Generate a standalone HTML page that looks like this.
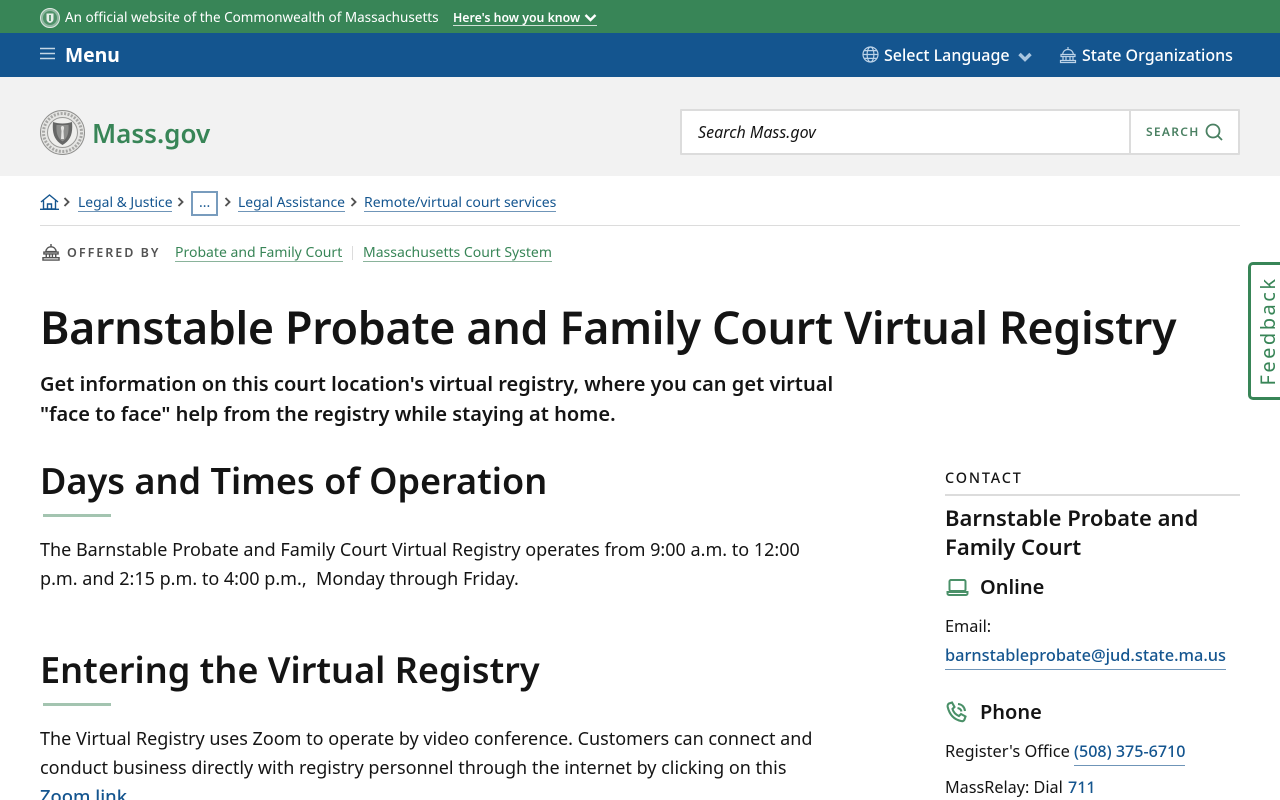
<!DOCTYPE html>
<html lang="en">
<head>
<meta charset="utf-8">
<title>Barnstable Probate and Family Court Virtual Registry | Mass.gov</title>
<style>
html,body{margin:0;padding:0;width:1280px;height:800px;overflow:hidden;background:#fff}
body{position:relative;font-family:"Noto Sans","Noto Sans CJK JP","Liberation Sans",sans-serif;color:#141414}
.t{position:absolute;white-space:nowrap;line-height:30px;height:30px}
.b{position:absolute}
a{color:inherit;text-decoration:none}
.u{position:absolute;height:1px}
svg{position:absolute;overflow:visible}
</style>
</head>
<body>
<div class="b" style="left:0;top:0;width:1280px;height:33px;background:#388557"></div>
<div class="b" style="left:0;top:33px;width:1280px;height:44px;background:#14558f"></div>
<div class="b" style="left:0;top:77px;width:1280px;height:99px;background:#f2f2f2"></div>

<svg style="left:40px;top:8px" width="20" height="20" viewBox="0 0 20 20"><circle cx="10" cy="10" r="9.500" fill="#8fb8a0" stroke="#dfe9e3"/><circle cx="10" cy="10" r="7" fill="#4f9069"/><path d="M6.500 5.500h7v5.500c0 2.200-1.700 3.500-3.500 4-1.800-.5-3.500-1.800-3.500-4z" fill="#e6efe9"/><path d="M10 7v6" stroke="#4f9069" stroke-width="1.800"/></svg>
<span class="t" style="left:65px;top:2px;font-size:13.500px;color:#fff">An official website of the Commonwealth of Massachusetts</span>
<span class="t" style="left:453px;top:3px;font-size:12.300px;font-weight:600;color:#fff">Here's how you know</span>
<svg style="left:584px;top:13px" width="13" height="10" viewBox="0 0 13 10"><path d="M1.500 2l5 5 5-5" fill="none" stroke="#fff" stroke-width="2.400"/></svg>
<div class="u" style="left:453px;top:25px;width:144px;height:1px;background:#cfe0d6"></div>

<svg style="left:40px;top:47px" width="15" height="14" viewBox="0 0 15 14"><path d="M0 1.500h15M0 6.500h15M0 11.500h15" stroke="#c5d7e6" stroke-width="1.400"/></svg>
<span class="t" style="left:65px;top:40px;font-size:19.300px;font-weight:700;color:#fff">Menu</span>

<svg style="left:862px;top:46px" width="17" height="17" viewBox="0 0 17 17" fill="none" stroke="#bcd3e8" stroke-width="1.200"><circle cx="8.500" cy="8.500" r="7.500"/><ellipse cx="8.500" cy="8.500" rx="3.400" ry="7.500"/><path d="M1 8.500h15M2 4.600h13M2 12.400h13"/></svg>
<span class="t" style="left:884px;top:40px;font-size:16px;font-weight:500;color:#fff">Select Language</span>
<svg style="left:1018px;top:52px" width="14" height="10" viewBox="0 0 14 10"><path d="M1.500 2L7 7.500 12.500 2" fill="none" stroke="#a9c6e0" stroke-width="3.400"/></svg>
<svg style="left:1059px;top:46px" width="18" height="18" viewBox="0 0 18 18" fill="none" stroke="#bcd3e8" stroke-width="1.200"><path d="M9 1v2M3.500 8.500C4 5.500 6 3.500 9 3.500s5 2 5.500 5zM2 8.500h14v2H2zM4 10.500v4M7 10.500v4M11 10.500v4M14 10.500v4M1.500 14.500h15v2h-15z"/></svg>
<span class="t" style="left:1082px;top:40px;font-size:16px;font-weight:500;color:#fff">State Organizations</span>

<svg style="left:40px;top:110px" width="45" height="45" viewBox="0 0 45 45"><circle cx="22.500" cy="22.500" r="22" fill="#e6e6e4" stroke="#8f8f8d"/><circle cx="22.500" cy="22.500" r="19" fill="none" stroke="#a7a7a5" stroke-width="3" stroke-dasharray="2 1.500"/><circle cx="22.500" cy="22.500" r="15" fill="#eeeeec" stroke="#9a9a98"/><path d="M13 12c6 2 13 2 19 0 1 11-1 18-9.500 23C14 30 12 23 13 12z" fill="#666766"/><path d="M16.500 15h12c.5 8-1 13-6 16.500C17.500 28 16 23 16.500 15z" fill="#8d8e8c"/><path d="M22.500 16c1.200 0 1.600 1 1.600 2l-.6 3 .5 8h-3l.5-8-.6-3c0-1 .4-2 1.600-2z" fill="#e4e4e2"/></svg>
<span class="t" style="left:92px;top:118px;font-size:26px;font-weight:600;color:#388557">Mass.gov</span>

<div class="b" style="left:680px;top:109px;width:556px;height:42px;background:#fff;border:2px solid #dcdcdc;border-radius:1px"></div>
<div class="b" style="left:1129px;top:110px;width:2px;height:44px;background:#dcdcdc"></div>
<span class="t" style="left:698px;top:117px;font-size:16px;font-style:italic;color:#141414">Search Mass.gov</span>
<span class="t" style="left:1146px;top:117px;font-size:12px;font-weight:600;letter-spacing:1.300px;color:#4a8062">SEARCH</span>
<svg style="left:1205px;top:123px" width="18" height="18" viewBox="0 0 18 18" fill="none" stroke="#4a8062" stroke-width="1.800"><circle cx="8" cy="8" r="6.500"/><path d="M12.500 12.500L17 17"/></svg>

<svg style="left:40px;top:194px" width="19" height="16" viewBox="0 0 19 16" fill="none" stroke="#14558f" stroke-width="1.400"><path d="M1 8L9.500 1 18 8M3.500 6.500V15h12V6.500M7.500 15V10h4v5"/><path d="M0 15.300h19"/></svg>
<svg style="left:63px;top:197px" width="8" height="10" viewBox="0 0 8 10"><path d="M1.500 1l4 4-4 4" fill="none" stroke="#535353" stroke-width="1.900"/></svg>
<span class="t" style="left:78px;top:188px;font-size:13.900px;color:#14558f">Legal &amp; Justice</span>
<div class="u" style="left:78px;top:211px;width:94px;background:#6f95b8"></div>
<svg style="left:177px;top:197px" width="8" height="10" viewBox="0 0 8 10"><path d="M1.500 1l4 4-4 4" fill="none" stroke="#535353" stroke-width="1.900"/></svg>
<div class="b" style="left:191px;top:191px;width:23px;height:21px;border:2px solid #789cbd"></div>
<span class="t" style="left:199px;top:188px;font-size:14px;color:#14558f">...</span>
<svg style="left:224px;top:197px" width="8" height="10" viewBox="0 0 8 10"><path d="M1.500 1l4 4-4 4" fill="none" stroke="#535353" stroke-width="1.900"/></svg>
<span class="t" style="left:238px;top:188px;font-size:13.900px;color:#14558f">Legal Assistance</span>
<div class="u" style="left:238px;top:211px;width:107px;background:#6f95b8"></div>
<svg style="left:350px;top:197px" width="8" height="10" viewBox="0 0 8 10"><path d="M1.500 1l4 4-4 4" fill="none" stroke="#535353" stroke-width="1.900"/></svg>
<span class="t" style="left:364px;top:188px;font-size:14px;color:#14558f">Remote/virtual court services</span>
<div class="u" style="left:364px;top:211px;width:192px;background:#6f95b8"></div>
<div class="b" style="left:40px;top:225px;width:1200px;height:1px;background:#dcdcdc"></div>

<svg style="left:42px;top:244px" width="18" height="17" viewBox="0 0 19 18" fill="none" stroke="#535353" stroke-width="1.500"><path d="M9.500 0v2.500M4 8C4.500 5 6.500 3 9.500 3s5 2 5.500 5zM2 8.500h15v2H2zM4.500 10.500v4M8 10.500v4M11 10.500v4M14.500 10.500v4M1 14.500h17v2.500H1z"/></svg>
<span class="t" style="left:67px;top:238px;font-size:12.500px;font-weight:600;letter-spacing:2px;color:#535353">OFFERED BY</span>
<span class="t" style="left:175px;top:238px;font-size:14px;color:#388557">Probate and Family Court</span>
<div class="u" style="left:175px;top:261px;width:168px;background:#8ab39b"></div>
<div class="b" style="left:352px;top:246px;width:1px;height:14px;background:#dcdcdc"></div>
<span class="t" style="left:363px;top:238px;font-size:14px;color:#388557">Massachusetts Court System</span>
<div class="u" style="left:363px;top:261px;width:189px;background:#8ab39b"></div>

<h1 class="t" style="margin:0;left:40px;top:313px;font-size:44.800px;font-weight:600;letter-spacing:-.34px">Barnstable Probate and Family Court Virtual Registry</h1>
<span class="t" style="left:40px;top:369px;font-size:20px;font-weight:600;letter-spacing:.025px">Get information on this court location's virtual registry, where you can get virtual</span>
<span class="t" style="left:40px;top:399px;font-size:20px;font-weight:600">"face to face" help from the registry while staying at home.</span>

<h2 class="t" style="margin:0;left:40px;top:465px;font-size:36.070px;font-weight:600">Days and Times of Operation</h2>
<div class="b" style="left:43px;top:514px;width:68px;height:3px;background:#a3c4b0"></div>
<span class="t" style="left:40px;top:535px;font-size:18px">The Barnstable Probate and Family Court Virtual Registry operates from 9:00 a.m. to 12:00</span>
<span class="t" style="left:40px;top:564px;font-size:18px">p.m. and 2:15 p.m. to 4:00 p.m.,&nbsp; Monday through Friday.</span>

<h2 class="t" style="margin:0;left:40px;top:654px;font-size:36.070px;font-weight:600">Entering the Virtual Registry</h2>
<div class="b" style="left:43px;top:703px;width:68px;height:3px;background:#a3c4b0"></div>
<span class="t" style="left:40px;top:724px;font-size:18px">The Virtual Registry uses Zoom to operate by video conference. Customers can connect and</span>
<span class="t" style="left:40px;top:753px;font-size:18px">conduct business directly with registry personnel through the internet by clicking on this</span>
<span class="t" style="left:40px;top:782px;font-size:18.400px;font-weight:500;color:#14558f">Zoom link</span>

<span class="t" style="left:945px;top:464px;font-size:14.400px;font-weight:500;letter-spacing:1.850px">CONTACT</span>
<div class="b" style="left:945px;top:494px;width:295px;height:2px;background:#dcdcdc"></div>
<span class="t" style="left:945px;top:503px;font-size:22px;font-weight:600">Barnstable Probate and</span>
<span class="t" style="left:945px;top:532px;font-size:22px;font-weight:600">Family Court</span>
<svg style="left:946px;top:578px" width="23" height="19" viewBox="0 0 23 19" fill="none" stroke="#4a9068" stroke-width="2"><rect x="3.500" y="2" width="16" height="11" rx="1.500"/><path d="M1.500 14h20v1.500a1.500 1.500 0 0 1-1.500 1.500H3a1.500 1.500 0 0 1-1.500-1.500z"/></svg>
<span class="t" style="left:980px;top:572px;font-size:20px;font-weight:600">Online</span>
<span class="t" style="left:945px;top:611px;font-size:16.300px">Email:</span>
<span class="t" style="left:945px;top:640px;font-size:16.350px;font-weight:500;color:#14558f">barnstableprobate@jud.state.ma.us</span>
<div class="u" style="left:945px;top:669px;width:281px;background:#6f95b8"></div>
<svg style="left:946px;top:701px" width="22" height="22" viewBox="0 0 22 22" fill="none" stroke="#4a9068" stroke-width="2.100"><path d="M3 2.500l3-1 2.500 4.500-2 2c.8 3 3 5.500 6.500 7l2-2 4.500 2.500-1 3c-.5 1.500-2 2-3.500 1.500C8 18.500 3.500 13.500 1.700 6c-.3-1.500.3-3 1.300-3.500z"/><path d="M12 3c4 .3 6.500 3 7 7M11.500 7c2 .3 3.500 1.500 4 3.500"/></svg>
<span class="t" style="left:980px;top:697px;font-size:20px;font-weight:600">Phone</span>
<span class="t" style="left:945px;top:736px;font-size:16.400px">Register's Office</span>
<span class="t" style="left:1074px;top:736px;font-size:16.100px;font-weight:500;color:#14558f">(508) 375-6710</span>
<div class="u" style="left:1074px;top:765px;width:111px;background:#6f95b8"></div>
<span class="t" style="left:945px;top:772px;font-size:16.200px">MassRelay: Dial</span>
<span class="t" style="left:1068px;top:772px;font-size:16.100px;font-weight:500;color:#14558f">711</span>

<div class="b" style="left:1248px;top:262px;width:32px;height:132px;border:3px solid #388557;border-right:0;border-radius:5px 0 0 5px;background:#fff"></div>
<span class="t" style="left:1268px;top:331px;font-size:20px;letter-spacing:2.500px;color:#388557;transform:translate(-50%,-50%) rotate(-90deg)">Feedback</span>
</body>
</html>
